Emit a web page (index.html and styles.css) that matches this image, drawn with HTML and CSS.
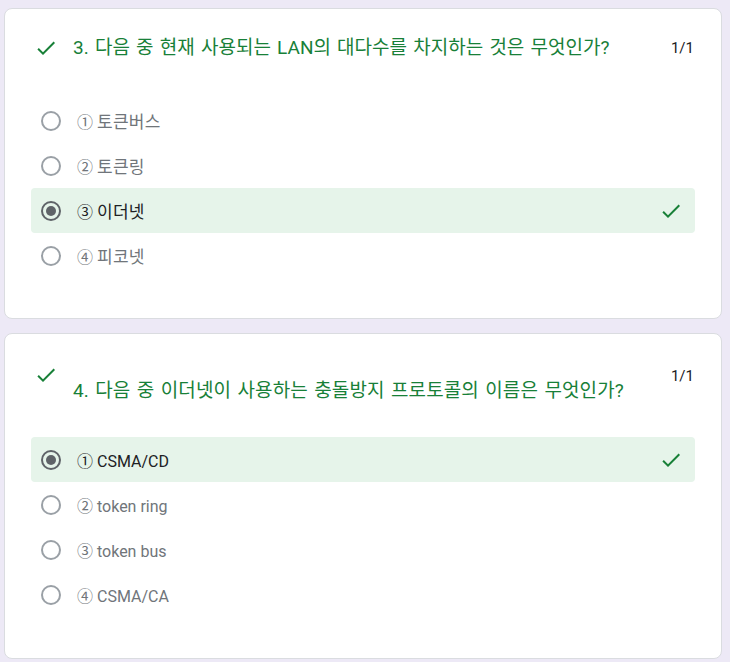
FILE: index.html
```html
<!DOCTYPE html>
<html lang="ko">
<head>
<meta charset="utf-8">
<link rel="stylesheet" href="styles.css">
</head>
<body>
<div class="page">
  <section class="card">
    <div class="head">
      <svg class="mark" viewBox="0 0 24 24"><path d="M9 16.2L4.8 12l-1.4 1.4L9 19 21 7l-1.4-1.4L9 16.2z"/></svg>
      <div class="title">3. 다음 중 현재 사용되는 LAN의 대다수를 차지하는 것은 무엇인가?</div>
      <div class="score">1/1</div>
    </div>
    <div class="options">
      <div class="opt"><span class="radio"></span><span class="label">① <span class="ko">토큰버스</span></span></div>
      <div class="opt"><span class="radio"></span><span class="label">② <span class="ko">토큰링</span></span></div>
      <div class="opt sel"><span class="radio"></span><span class="label">③ <span class="ko">이더넷</span></span><svg class="mark opt-mark" viewBox="0 0 24 24"><path d="M9 16.2L4.8 12l-1.4 1.4L9 19 21 7l-1.4-1.4L9 16.2z"/></svg></div>
      <div class="opt"><span class="radio"></span><span class="label">④ <span class="ko">피코넷</span></span></div>
    </div>
  </section>
  <section class="card card-two">
    <div class="head head-wrap">
      <svg class="mark" viewBox="0 0 24 24"><path d="M9 16.2L4.8 12l-1.4 1.4L9 19 21 7l-1.4-1.4L9 16.2z"/></svg>
      <div class="title title-low">4. 다음 중 이더넷이 사용하는 충돌방지 프로토콜의 이름은 무엇인가?</div>
      <div class="score score-low">1/1</div>
    </div>
    <div class="options options-tight">
      <div class="opt sel"><span class="radio"></span><span class="label">① CSMA/CD</span><svg class="mark opt-mark" viewBox="0 0 24 24"><path d="M9 16.2L4.8 12l-1.4 1.4L9 19 21 7l-1.4-1.4L9 16.2z"/></svg></div>
      <div class="opt"><span class="radio"></span><span class="label">② token ring</span></div>
      <div class="opt"><span class="radio"></span><span class="label">③ token bus</span></div>
      <div class="opt"><span class="radio"></span><span class="label">④ CSMA/CA</span></div>
    </div>
  </section>
</div>
</body>
</html>
```

FILE: styles.css
```css
html, body {
  margin: 0;
  padding: 0;
  background: #ede9f6;
}
body {
  font-family: Roboto, "Noto Sans CJK KR", sans-serif;
  color: #202124;
}
.page {
  padding: 8px 8px 0 4px;
  display: flex;
  flex-direction: column;
  gap: 14px;
}
.card {
  background: #fff;
  border: 1px solid #dadce0;
  border-radius: 8px;
  padding: 27px 26px 40px 26px;
}
.card-two {
  padding-top: 29px;
  padding-bottom: 41px;
}
.head {
  display: flex;
  align-items: center;
  height: 24px;
}
.head-wrap {
  align-items: flex-start;
  height: auto;
}
.mark {
  width: 24px;
  height: 24px;
  fill: #188038;
  flex: none;
}
.head .mark {
  margin-left: 3px;
  margin-right: 15px;
}
.title {
  flex: 1;
  font-size: 19px;
  line-height: 24px;
  color: #188038;
  word-spacing: 1.5px;
}
.title-low {
  padding-top: 16px;
  letter-spacing: 0.12px;
}
.score {
  font-size: 15px;
  line-height: 24px;
  color: #202124;
  margin-right: 1px;
}
.score-low {
  padding-top: 1px;
}
.options {
  margin-top: 38px;
  display: flex;
  flex-direction: column;
}
.options-tight {
  margin-top: 34px;
}
.opt {
  height: 45px;
  display: flex;
  align-items: center;
  padding: 0 12px 0 10px;
  border-radius: 4px;
  font-size: 16px;
  color: #70757a;
}
.opt.sel {
  background: #e6f4ea;
  color: #202124;
}
.ko {
  font-size: 17px;
  letter-spacing: 0.3px;
}
.radio {
  width: 20px;
  height: 20px;
  box-sizing: border-box;
  border: 2px solid #9aa0a6;
  border-radius: 50%;
  margin-right: 16px;
  display: flex;
  align-items: center;
  justify-content: center;
  flex: none;
}
.sel .radio {
  border-color: #5f6368;
}
.sel .radio::after {
  content: "";
  width: 10px;
  height: 10px;
  border-radius: 50%;
  background: #5f6368;
}
.label {
  flex: 1;
}
.opt-mark {
  margin-left: auto;
}
```
